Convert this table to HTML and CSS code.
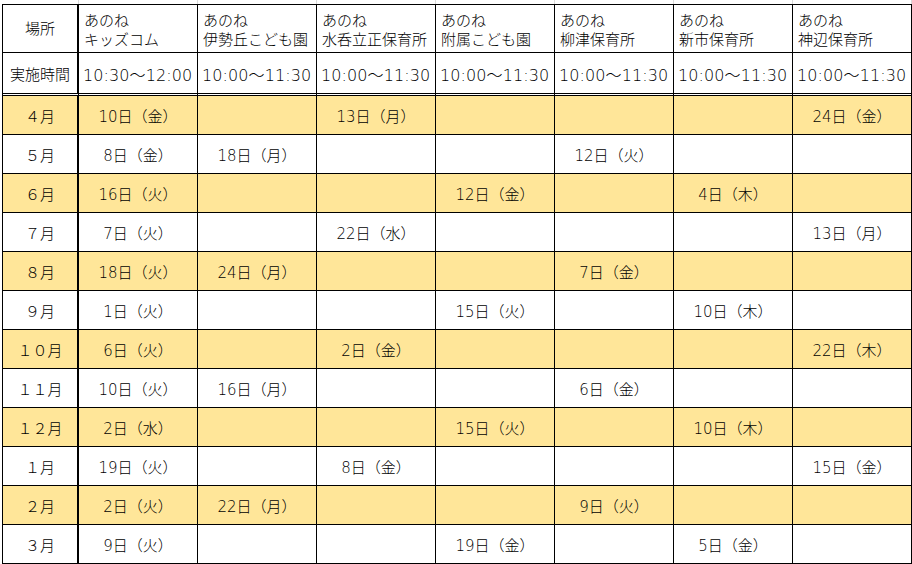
FILE: index.html
```html
<!DOCTYPE html>
<html lang="ja">
<head>
<meta charset="utf-8">
<title>あのね 実施日程</title>
<link rel="stylesheet" href="styles.css">
</head>
<body>
<div class="grid-top">
  <span class="g g0"></span><span class="g"></span><span class="g"></span><span class="g"></span><span class="g"></span><span class="g"></span><span class="g"></span><span class="g"></span>
</div>
<table class="sched">
  <colgroup>
    <col class="c0"><col class="c"><col class="c"><col class="c"><col class="c"><col class="c"><col class="c"><col class="c">
  </colgroup>
  <thead>
    <tr class="h1">
      <th class="lbl">場所</th>
      <th class="place">あのね<br>キッズコム</th>
      <th class="place">あのね<br>伊勢丘こども園</th>
      <th class="place">あのね<br>水呑立正保育所</th>
      <th class="place">あのね<br>附属こども園</th>
      <th class="place">あのね<br>柳津保育所</th>
      <th class="place">あのね<br>新市保育所</th>
      <th class="place">あのね<br>神辺保育所</th>
    </tr>
    <tr class="h2">
      <th class="lbl">実施時間</th>
      <th class="time">10:30～12:00</th>
      <th class="time">10:00～11:30</th>
      <th class="time">10:00～11:30</th>
      <th class="time">10:00～11:30</th>
      <th class="time">10:00～11:30</th>
      <th class="time">10:00～11:30</th>
      <th class="time">10:00～11:30</th>
    </tr>
  </thead>
  <tbody>
    <tr class="hl"><td class="m">４月</td><td>10日（金）</td><td></td><td>13日（月）</td><td></td><td></td><td></td><td>24日（金）</td></tr>
    <tr><td class="m">５月</td><td>8日（金）</td><td>18日（月）</td><td></td><td></td><td>12日（火）</td><td></td><td></td></tr>
    <tr class="hl"><td class="m">６月</td><td>16日（火）</td><td></td><td></td><td>12日（金）</td><td></td><td>4日（木）</td><td></td></tr>
    <tr><td class="m">７月</td><td>7日（火）</td><td></td><td>22日（水）</td><td></td><td></td><td></td><td>13日（月）</td></tr>
    <tr class="hl"><td class="m">８月</td><td>18日（火）</td><td>24日（月）</td><td></td><td></td><td>7日（金）</td><td></td><td></td></tr>
    <tr><td class="m">９月</td><td>1日（火）</td><td></td><td></td><td>15日（火）</td><td></td><td>10日（木）</td><td></td></tr>
    <tr class="hl"><td class="m">１０月</td><td>6日（火）</td><td></td><td>2日（金）</td><td></td><td></td><td></td><td>22日（木）</td></tr>
    <tr><td class="m">１１月</td><td>10日（火）</td><td>16日（月）</td><td></td><td></td><td>6日（金）</td><td></td><td></td></tr>
    <tr class="hl"><td class="m">１２月</td><td>2日（水）</td><td></td><td></td><td>15日（火）</td><td></td><td>10日（木）</td><td></td></tr>
    <tr><td class="m">１月</td><td>19日（火）</td><td></td><td>8日（金）</td><td></td><td></td><td></td><td>15日（金）</td></tr>
    <tr class="hl"><td class="m">２月</td><td>2日（火）</td><td>22日（月）</td><td></td><td></td><td>9日（火）</td><td></td><td></td></tr>
    <tr><td class="m">３月</td><td>9日（火）</td><td></td><td></td><td>19日（金）</td><td></td><td>5日（金）</td><td></td></tr>
  </tbody>
</table>
</body>
</html>
```
FILE: styles.css
```css
html, body {
  margin: 0;
  padding: 0;
  background: #ffffff;
}

body {
  font-family: "DejaVu Sans", "Noto Sans CJK JP", sans-serif;
  font-weight: 300;
  color: #000000;
  font-size: 15px;
  width: 912px;
  height: 564px;
  overflow: hidden;
}

.grid-top {
  display: flex;
  height: 4px;
  margin-left: 3px;
}

.grid-top .g {
  box-sizing: border-box;
  width: 119px;
  height: 4px;
  border-right: 1px solid #d9d9d9;
}

.grid-top .g0 {
  width: 76px;
}

.sched {
  margin-left: 2px;
  border-collapse: separate;
  border-spacing: 0;
  table-layout: fixed;
  width: 910px;
  border-left: 1px solid #000;
  border-top: 1px solid #000;
}

.sched col.c0 { width: 76px; }
.sched col.c { width: 119px; }

.sched th,
.sched td {
  box-sizing: border-box;
  padding: 0;
  border-right: 1px solid #000;
  border-bottom: 1px solid #000;
  font-weight: 300;
  white-space: nowrap;
  overflow: hidden;
}

.sched th:first-child,
.sched td:first-child {
  border-right: 2px solid #000;
}

.h1 th {
  height: 48px;
  line-height: 19px;
}

.h1 .place {
  text-align: left;
  padding-left: 5px;
  padding-top: 4px;
}

.h1 .lbl {
  padding-top: 2px;
}

.h2 th {
  height: 43px;
  border-bottom: 3px double #000;
}

.h2 .lbl {
  padding-top: 1px;
}

.h2 .time {
  text-align: left;
  padding-left: 4px;
  padding-top: 2px;
  font-size: 16px;
  letter-spacing: 0.1px;
}

.lbl {
  text-align: center;
}

.sched tbody td {
  height: 39px;
  text-align: center;
}

.sched tbody tr.hl td {
  background: #ffe699;
}

.sched tbody td.m {
  text-align: center;
}
```
